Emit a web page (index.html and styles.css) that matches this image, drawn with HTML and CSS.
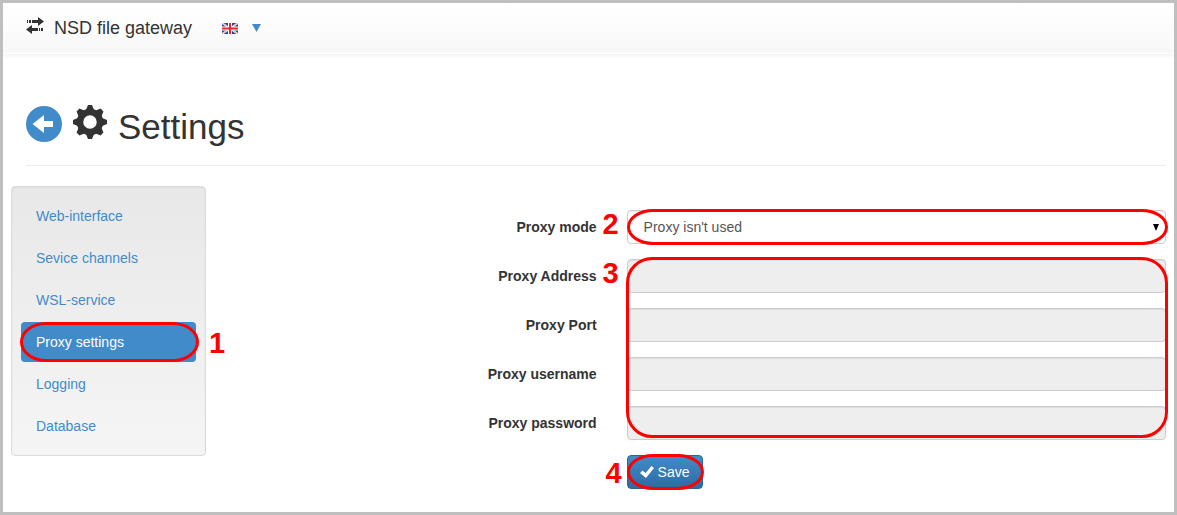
FILE: index.html
```html
<!DOCTYPE html>
<html lang="en">
<head>
    <meta charset="UTF-8">
    <meta name="viewport" content="width=device-width, initial-scale=1.0">
    <title>NSD file gateway</title>
    <link rel="stylesheet" href="styles.css">
</head>
<body>
    <nav class="navbar">
        <a class="brand" href="#">
            <svg class="brand-icon" viewBox="0 1 18 18" width="18" height="18" aria-hidden="true">
                <path d="M1 3h1v3H1zM3 3h2v3H3zM6 3h6V0l6 4.500L12 9V6H6zM0 12.500L6 8v3h6v3H6v3zM13 11h1v3h-1zM15 11h2v3h-2z"/>
            </svg>
            NSD file gateway
        </a>
        <button class="lang" type="button" aria-label="Language">
            <svg viewBox="0 0 16 11" width="16" height="11" aria-hidden="true">
                <rect width="16" height="11" fill="#2f4590"/>
                <path d="M0 0l16 11M16 0L0 11" stroke="#fff" stroke-width="1.800"/>
                <path d="M0 0l16 11M16 0L0 11" stroke="#dc7a88" stroke-width="0.600"/>
                <path d="M8 0v11M0 5.500h16" stroke="#fff" stroke-width="4"/>
                <path d="M8 0v11M0 5.500h16" stroke="#e8282c" stroke-width="2"/>
            </svg>
            <svg viewBox="0 0 9 8" width="9" height="8" aria-hidden="true">
                <path d="M0 0h9L4.500 8z" fill="#428bca"/>
            </svg>
        </button>
    </nav>

    <main class="container">
        <header class="page-header">
            <a class="back" href="#" aria-label="Back">
                <svg viewBox="0 0 36 36" width="36" height="36" aria-hidden="true">
                    <circle cx="18" cy="18" r="18" fill="#428bca"/>
                    <path d="M6.500 18L18 9v6h9v6h-9v6z" fill="#fff"/>
                </svg>
            </a>
            <svg class="gear" viewBox="0 1 34 34" width="34" height="34" aria-hidden="true">
                <g fill="#333">
                    <path id="teeth" d="M15 0h4l2.500 6h-9zM15 34h4l2.500-6h-9zM0 15v4l6 2.500v-9zM34 15v4l-6 2.500v-9z"/>
                    <use href="#teeth" transform="rotate(45 17 17)"/>
                </g>
                <circle cx="17" cy="17" r="10" fill="none" stroke="#333" stroke-width="6.500"/>
            </svg>
            <h1>Settings</h1>
        </header>

        <div class="row">
            <ul class="sidebar">
                <li><a href="#">Web-interface</a></li>
                <li><a href="#">Sevice channels</a></li>
                <li><a href="#">WSL-service</a></li>
                <li class="active">
                    <a href="#">Proxy settings</a>
                    <span class="ring ring-nav"></span>
                    <span class="step step-nav">1</span>
                </li>
                <li><a href="#">Logging</a></li>
                <li><a href="#">Database</a></li>
            </ul>

            <form class="form">
                <label for="mode">Proxy mode</label>
                <div class="field">
                    <select id="mode">
                        <option>Proxy isn't used</option>
                    </select>
                    <svg class="arrow" viewBox="0 0 6 7" width="6" height="7" aria-hidden="true">
                        <path d="M0 0h6L3 7z"/>
                    </svg>
                    <span class="ring"></span>
                    <span class="step">2</span>
                </div>

                <label for="address">Proxy Address</label>
                <div class="field">
                    <input type="text" id="address" disabled>
                    <span class="step">3</span>
                </div>

                <label for="port">Proxy Port</label>
                <input type="text" id="port" disabled>

                <label for="username">Proxy username</label>
                <input type="text" id="username" disabled>

                <label for="password">Proxy password</label>
                <input type="password" id="password" disabled>

                <span class="ring ring-group"></span>

                <div class="field actions">
                    <button class="save" type="submit">
                        <svg viewBox="0 0 14 12" width="14" height="12" aria-hidden="true">
                            <path d="M0 7l2.500-2.500L5.500 7 11.500 0 14 2 6 12z" fill="#fff"/>
                        </svg>
                        Save
                    </button>
                    <span class="ring"></span>
                    <span class="step step-save">4</span>
                </div>
            </form>
        </div>
    </main>
</body>
</html>
```
FILE: styles.css
```css
* {
    box-sizing: border-box;
}

body {
    margin: 0;
    min-height: 100vh;
    border: 3px solid #bfbfbf;
    background: #fff;
    color: #333;
    font-family: "Liberation Sans", Arial, sans-serif;
    font-size: 14px;
    line-height: 20px;
}

a {
    color: #428bca;
    text-decoration: none;
}

svg {
    display: block;
    flex: none;
}

.navbar {
    display: flex;
    align-items: center;
    gap: 30px;
    height: 51px;
    padding: 0 23px;
    border-bottom: 1px solid #fff;
    background: linear-gradient(#fff, #f8f8f8);
    background-clip: padding-box;
    box-shadow: 0 1px 5px rgba(0, 0, 0, 0.08);
}

.brand {
    display: flex;
    gap: 10px;
    color: #333;
    font-size: 18px;
}

.brand-icon {
    fill: #333;
    overflow: visible;
}

.lang {
    display: flex;
    align-items: center;
    gap: 14px;
    padding: 0;
    border: none;
    background: none;
    cursor: pointer;
}

.container {
    padding: 52px 8px 20px;
}

.page-header {
    display: flex;
    gap: 11px;
    margin: 0 0 20px 15px;
    padding-bottom: 17px;
    border-bottom: 1px solid #eee;
}

.gear {
    overflow: visible;
}

h1 {
    margin: 0;
    font-size: 35px;
    font-weight: normal;
    line-height: 42px;
}

.row {
    display: flex;
    align-items: flex-start;
}

.sidebar {
    display: flex;
    flex-direction: column;
    flex: 0 0 195px;
    gap: 2px;
    margin: 0;
    padding: 9px;
    border: 1px solid #dcdcdc;
    border-radius: 4px;
    background: linear-gradient(#e8e8e8, #f5f5f5);
    box-shadow: inset 0 1px 3px rgba(0, 0, 0, 0.05);
    list-style: none;
}

.sidebar li {
    position: relative;
}

.sidebar a {
    display: block;
    padding: 10px 15px;
    border-radius: 4px;
}

.sidebar .active a {
    background: #428bca;
    color: #fff;
}

.form {
    position: relative;
    display: grid;
    flex: 1;
    grid-template-columns: 42fr 58fr;
    gap: 15px 30px;
    padding-top: 24px;
}

label {
    padding-top: 7px;
    font-weight: bold;
    text-align: right;
}

.field {
    position: relative;
}

select,
input {
    display: block;
    width: 100%;
    height: 34px;
    padding: 6px 16px;
    border: 1px solid #ccc;
    border-radius: 4px;
    background: #fff;
    box-shadow: inset 0 1px 1px rgba(0, 0, 0, 0.075);
    color: #555;
    font: inherit;
    appearance: none;
}

input:disabled {
    background: #eee;
}

.arrow {
    position: absolute;
    top: 14px;
    right: 7px;
    pointer-events: none;
}

.actions {
    grid-column: 2;
    justify-self: start;
}

.save {
    display: flex;
    align-items: center;
    gap: 4px;
    height: 34px;
    padding: 0 12px;
    border: 1px solid #2b669a;
    border-radius: 4px;
    background: linear-gradient(#428bca, #2d6ca2);
    color: #fff;
    font: inherit;
    cursor: pointer;
}

/* red callouts over the controls */
.ring {
    position: absolute;
    inset: -1px -2px -1px 0;
    border: 3px solid #f00;
    border-radius: 26px / 18px;
    pointer-events: none;
}

.actions .ring {
    right: -1px;
}

.ring-nav {
    inset: 0 -3px 0 -1px;
    border-radius: 26px / 20px;
}

.ring-group {
    grid-area: 2 / 2 / 6 / 3;
    inset: -2px -2px 2px -1px;
    border-radius: 26px;
}

.step {
    position: absolute;
    top: -1px;
    left: -24px;
    color: #f00;
    font-size: 29px;
    font-weight: bold;
    line-height: 30px;
}

.step-nav {
    top: 6px;
    left: 188px;
}

.step-save {
    top: 3px;
    left: -21px;
}
```
